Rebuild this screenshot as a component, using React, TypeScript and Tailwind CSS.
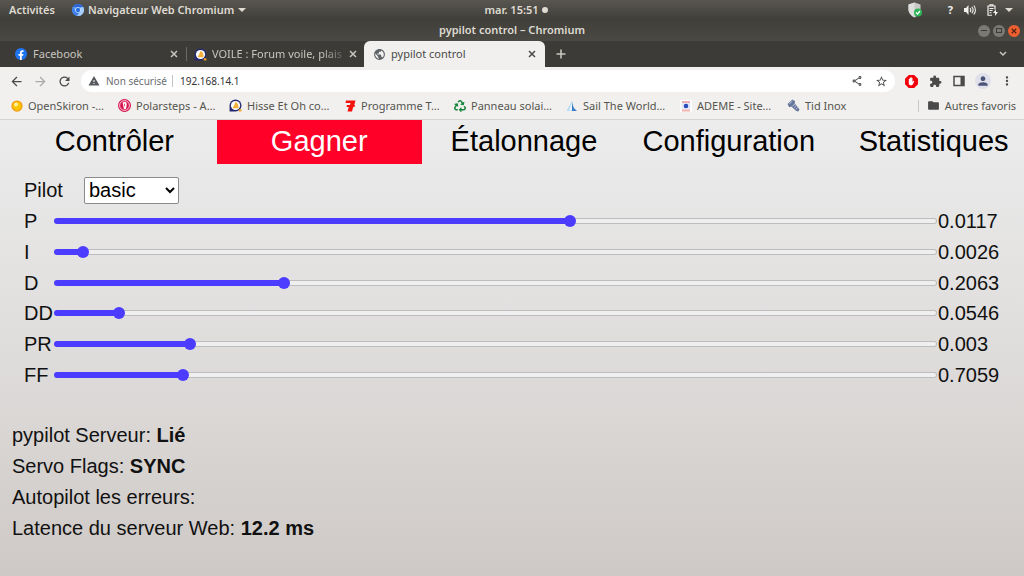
import React, { useState } from 'react';
import {
  MdArrowBack,
  MdArrowForward,
  MdExtension,
  MdFolder,
  MdMoreVert,
  MdOutlineShare,
  MdPerson,
  MdPublic,
  MdRefresh,
  MdStarBorder,
  MdWarning,
} from 'react-icons/md';
import { FaRecycle } from 'react-icons/fa';

const ChromiumIcon = () => (
  <svg viewBox="0 0 24 24" className="h-3 w-3">
    <circle cx="12" cy="12" r="12" fill="#5c9df5" />
    <path d="M1.600 6A12 12 0 0 1 22.400 6L12 6.500z" fill="#2a66d8" />
    <path d="M1.600 6A12 12 0 0 0 10 23.800L14.500 17 6.800 14z" fill="#3f7fe8" />
    <path d="M22.400 6A12 12 0 0 1 10 23.800L17 14.500 17 7z" fill="#a5cdfb" />
    <circle cx="12" cy="12" r="5.500" fill="#e8f1fe" />
    <circle cx="12" cy="12" r="4.400" fill="#2a6fe0" />
  </svg>
);

const FacebookIcon = () => (
  <svg viewBox="0 0 24 24" className="h-3 w-3">
    <circle cx="12" cy="12" r="12" fill="#1f74f2" />
    <path d="M10 24v-8.500H7V12h3V9.500c0-3.200 1.800-4.900 4.700-4.900.9 0 1.900.2 2.300.3v3h-1.500c-1.500 0-2 .9-2 1.900V12h3.300l-.6 3.500h-2.700V24z" fill="#fff" />
  </svg>
);

const HisseIcon = () => (
  <svg viewBox="0 0 24 24" className="h-[13px] w-[13px]">
    <path d="M1 23V12A11 11 0 1 1 12 23z" fill="#26296f" />
    <circle cx="12" cy="12" r="8.500" fill="#fff" />
    <path d="M12 5c5 3 6 7 5.500 12H6.500C9 13 11 9 12 5z" fill="#f5b13c" />
    <path d="M18 19h5v4h-5z" fill="#f5a11c" />
  </svg>
);

const SunIcon = () => (
  <svg viewBox="0 0 24 24" className="h-3 w-3">
    <circle cx="12" cy="12" r="10" fill="#ffc400" stroke="#f09a10" strokeWidth="2.500" />
    <circle cx="10" cy="9" r="4" fill="#fff0a0" />
  </svg>
);

const PolarstepsIcon = () => (
  <svg viewBox="0 0 24 24" className="h-[13px] w-[13px]">
    <circle cx="12" cy="12" r="12" fill="#d9154f" />
    <circle cx="12" cy="12" r="9" fill="none" stroke="#fff" strokeWidth="1.500" />
    <path d="M8.500 6.500L13 5c2.500 1 3.500 3 3 6l-1 7-4 1z" fill="#fff" />
    <path d="M11 8l2 2-1 5z" fill="#d9154f" />
  </svg>
);

const ProgrammeIcon = () => (
  <svg viewBox="0 0 24 24" className="h-3 w-3">
    <path d="M4 1h19l-2.500 9H22l-1 4h-2.500L16 23H7l2.500-9H5l1-4h6l1-4H3z" fill="#f5120d" />
  </svg>
);

const SailIcon = () => (
  <svg viewBox="0 0 24 24" className="h-3 w-3">
    <path d="M12 1L1 22h10z" fill="#b8dcf3" />
    <path d="M13 1c0 8 1 15 9 21H11z" fill="#3c7cc4" />
    <path d="M12 5v16H6z" fill="#e8f4fb" />
  </svg>
);

const AdemeIcon = () => (
  <svg viewBox="0 0 24 24" className="h-3 w-3">
    <path d="M0 0h24v24H0z" fill="#fff" />
    <path d="M4 2h16v4H4zM4 19h16v4H4z" fill="#f2b0ac" />
    <path d="M3 6h18v12H3z" fill="#e2e9fa" />
    <circle cx="12" cy="12" r="4.500" fill="#2b4bb8" />
  </svg>
);

const ScrewIcon = () => (
  <svg viewBox="0 0 24 24" className="h-[13px] w-[13px]">
    <path d="M1 9L10 1l5 3-1 4 9 11-2 4-4-1L8 14l-4 1z" fill="#66759b" />
    <path d="M4 9l6-5M10 13l5-4M13 16l4-4M16 19l4-3" stroke="#cdd5e6" strokeWidth="1.500" />
  </svg>
);

const ShieldIcon = () => (
  <svg viewBox="0 0 28 32" className="h-4 w-[14px]">
    <path d="M13 1l12 4v10c0 7-5 12-12 16C6 27 1 22 1 15V5z" fill="#c9c9c7" />
    <path d="M13 1v30C6 27 1 22 1 15V5z" fill="#dededc" />
    <circle cx="20" cy="21" r="8" fill="#2fb457" />
    <path d="M16 21l3 3 5-6" fill="none" stroke="#fff" strokeWidth="2.500" />
  </svg>
);

const VolumeIcon = () => (
  <svg viewBox="0 0 24 24" className="h-3 w-3">
    <path d="M0 8h4l5-6v20l-5-6H0z" fill="#f2f1ee" />
    <path d="M12 8c2 2.500 2 5.500 0 8M15.500 5.500c3.500 4 3.500 9 0 13M19.500 3c4.500 5 4.500 13 0 18" fill="none" stroke="#f2f1ee" strokeWidth="2.200" />
  </svg>
);

const BatteryIcon = () => (
  <svg viewBox="0 0 22 24" className="h-3 w-[11px]" fill="none" stroke="#f2f1ee" strokeWidth="2.400">
    <path d="M6 3V1.500h6V3M10 22.500H2V4h14v7" />
    <path d="M5 9h8M5 13h6M5 17.500h4" />
    <path d="M18 11l-6 7h4v6l6-8h-4z" fill="#f2f1ee" stroke="none" />
  </svg>
);

const CaretIcon = () => (
  <svg viewBox="0 0 8 4" className="h-1 w-2">
    <path d="M0 0h8L4 4z" fill="currentColor" />
  </svg>
);

const StopHandIcon = () => (
  <svg viewBox="0 0 24 24" className="h-[13px] w-[13px]">
    <path d="M7 0h10l7 7v10l-7 7H7l-7-7V7z" fill="#f4000b" />
    <path d="M7 8c0-1 1.600-1 1.600 0V6c0-1.200 1.700-1.200 1.700 0V5c0-1.200 1.800-1.200 1.800 0v1c0-1.200 1.700-1.200 1.700 0v7l1.500-2c1-1 2.200-.3 1.700.8l-2.500 5.500c-.6 1.300-1.500 1.700-3 1.700H11c-2.500 0-4-1.500-4-4z" fill="#fff" />
  </svg>
);

const SidePanelIcon = () => (
  <svg viewBox="0 0 24 24" className="h-3 w-3">
    <path d="M2 3h20v18H2z" fill="none" stroke="#4a4a4a" strokeWidth="3" />
    <path d="M15 3h7v18h-7z" fill="#4a4a4a" />
  </svg>
);

const CloseIcon = () => (
  <svg viewBox="0 0 8 8" className="h-2 w-2" fill="none" stroke="currentColor" strokeWidth="1.500">
    <path d="M1 1l6 6M7 1L1 7" />
  </svg>
);

const PlusIcon = () => (
  <svg viewBox="0 0 10 10" className="h-[10px] w-[10px]" fill="none" stroke="currentColor" strokeWidth="1.600">
    <path d="M5 0.500v9M0.500 5h9" />
  </svg>
);

const ChevronIcon = () => (
  <svg viewBox="0 0 8 6" className="h-[6px] w-2" fill="none" stroke="currentColor" strokeWidth="1.500">
    <path d="M1 1l3 3 3-3" />
  </svg>
);

const bookmarks = [
  { label: 'OpenSkiron -…', icon: <SunIcon />, width: 'w-[108px]' },
  { label: 'Polarsteps - A…', icon: <PolarstepsIcon />, width: 'w-[111px]' },
  { label: 'Hisse Et Oh co…', icon: <HisseIcon />, width: 'w-[114px]' },
  { label: 'Programme T…', icon: <ProgrammeIcon />, width: 'w-[110px]' },
  { label: 'Panneau solai…', icon: <FaRecycle className="h-3 w-3 text-[#15843c]" />, width: 'w-[112px]' },
  { label: 'Sail The World…', icon: <SailIcon />, width: 'w-[114px]' },
  { label: 'ADEME - Site…', icon: <AdemeIcon />, width: 'w-[108px]' },
  { label: 'Tid Inox', icon: <ScrewIcon />, width: 'w-[80px]' },
];

const pages = ['Contrôler', 'Gagner', 'Étalonnage', 'Configuration', 'Statistiques'];

const gains = [
  { name: 'P', value: '0.0117', position: 586 },
  { name: 'I', value: '0.0026', position: 25 },
  { name: 'D', value: '0.2063', position: 257 },
  { name: 'DD', value: '0.0546', position: 67 },
  { name: 'PR', value: '0.003', position: 149 },
  { name: 'FF', value: '0.7059', position: 140 },
];

const status = [
  { label: 'pypilot Serveur:', value: 'Lié' },
  { label: 'Servo Flags:', value: 'SYNC' },
  { label: 'Autopilot les erreurs:', value: '' },
  { label: 'Latence du serveur Web:', value: '12.2 ms' },
];

const SystemBar = () => (
  <div className="grid h-5 grid-cols-[1fr_auto_1fr] items-center bg-linear-to-b from-[#595650] to-[#3f3e39] text-[11px] font-semibold text-[#dfdbd2]">
    <div className="flex items-center pl-[9px]">
      <button className="w-[63px] text-left">Activités</button>
      <button className="flex items-center gap-1 whitespace-nowrap">
        <ChromiumIcon />
        Navigateur Web Chromium
        <CaretIcon />
      </button>
    </div>
    <button className="flex items-center gap-[3px] pl-2">
      mar. 15:51
      <span className="h-[6px] w-[6px] rounded-full bg-[#dfdbd2]" />
    </button>
    <div className="flex items-center justify-end pr-[11px]">
      <ShieldIcon />
      <span className="w-[42px] pr-[11px] text-right font-bold text-[#f2f1ee]">?</span>
      <VolumeIcon />
      <span className="ml-[11px] mr-[7px]"><BatteryIcon /></span>
      <CaretIcon />
    </div>
  </div>
);

const TitleBar = () => (
  <div className="grid h-[21px] grid-cols-[1fr_auto_1fr] items-center bg-linear-to-b from-[#403f3a] to-[#4b4944] text-[11px] font-semibold text-[#dfdbd2]">
    <span />
    <span>pypilot control – Chromium</span>
    <div className="flex justify-end gap-[3px] pr-1">
      <button aria-label="Réduire" className="flex h-3 w-3 items-center justify-center rounded-full bg-[#7b7973]">
        <span className="h-px w-[6px] bg-[#3c3b37]" />
      </button>
      <button aria-label="Agrandir" className="flex h-3 w-3 items-center justify-center rounded-full bg-[#7b7973]">
        <span className="h-[5px] w-[6px] border border-[#3c3b37]" />
      </button>
      <button aria-label="Fermer" className="flex h-3 w-3 items-center justify-center rounded-full bg-[#ee5f32] text-[#53200f]">
        <svg viewBox="0 0 8 8" className="h-[6px] w-[6px]" fill="none" stroke="currentColor" strokeWidth="1.500">
          <path d="M1 1l6 6M7 1L1 7" />
        </svg>
      </button>
    </div>
  </div>
);

const TabStrip = () => (
  <div className="flex h-[26px] items-stretch bg-[#3c3b37] text-[11px] text-[#c9c6bf]">
    <div className="flex w-[186px] items-center pl-[15px] pr-2">
      <FacebookIcon />
      <span className="ml-[6px] flex-1">Facebook</span>
      <button aria-label="Fermer l'onglet Facebook"><CloseIcon /></button>
    </div>
    <div className="my-[6px] w-px bg-[#6c6a65]" />
    <div className="flex w-[177px] items-center pl-[7px] pr-[7px]">
      <HisseIcon />
      <span className="ml-[5px] flex-1 whitespace-nowrap mask-r-from-80%">VOILE : Forum voile, plais</span>
      <button aria-label="Fermer l'onglet VOILE"><CloseIcon /></button>
    </div>
    <div className="flex w-[181px] items-center rounded-t-md bg-[#f1f0ee] pl-[9px] pr-[9px] text-[#4a4a48]">
      <MdPublic className="h-[13px] w-[13px] text-[#5f6368]" />
      <span className="ml-[5px] flex-1">pypilot control</span>
      <button aria-label="Fermer l'onglet pypilot control"><CloseIcon /></button>
    </div>
    <button aria-label="Nouvel onglet" className="ml-[11px]"><PlusIcon /></button>
    <button aria-label="Rechercher dans les onglets" className="ml-auto mr-[17px]"><ChevronIcon /></button>
  </div>
);

const Toolbar = () => (
  <div className="flex h-7 items-center bg-[#f1f0ee] px-[9px] text-[#4a4a4a]">
    <div className="flex gap-[9px]">
      <button aria-label="Précédent"><MdArrowBack className="h-[15px] w-[15px]" /></button>
      <button aria-label="Suivant" className="text-[#a8a8a6]"><MdArrowForward className="h-[15px] w-[15px]" /></button>
      <button aria-label="Actualiser"><MdRefresh className="h-[15px] w-[15px]" /></button>
    </div>
    <div className="ml-[9px] flex h-[22px] flex-1 items-center rounded-full bg-white pl-[7px] pr-[6px]">
      <MdWarning className="h-3 w-3 text-[#55585c]" />
      <span className="ml-[6px] w-[67px] whitespace-nowrap border-r border-[#c4c4c4] text-[10px] leading-3 text-[#6a6d71]">Non sécurisé</span>
      <input aria-label="Adresse" defaultValue="192.168.14.1" className="min-w-0 flex-1 pl-[7px] text-[10px] text-[#333] outline-none" />
      <div className="flex gap-2">
        <button aria-label="Partager" className="flex w-4 items-center justify-center"><MdOutlineShare className="h-3 w-3" /></button>
        <button aria-label="Ajouter aux favoris" className="flex w-4 items-center justify-center"><MdStarBorder className="h-[13px] w-[13px]" /></button>
      </div>
    </div>
    <div className="ml-2 flex items-center gap-2">
      <button aria-label="Bloqueur" className="flex w-4 justify-center"><StopHandIcon /></button>
      <button aria-label="Extensions" className="flex w-4 justify-center"><MdExtension className="h-[13px] w-[13px]" /></button>
      <button aria-label="Panneau latéral" className="flex w-4 justify-center"><SidePanelIcon /></button>
      <button aria-label="Profil" className="flex h-4 w-4 items-center justify-center rounded-full bg-[#dfe0ea] text-[#4c5378]">
        <MdPerson className="h-[14px] w-[14px]" />
      </button>
      <button aria-label="Menu" className="flex w-4 justify-center"><MdMoreVert className="h-[14px] w-[14px]" /></button>
    </div>
  </div>
);

const BookmarksBar = () => (
  <div className="flex h-[25px] items-center border-b border-[#d4d3d1] bg-[#f1f0ee] pb-[3px] pl-[10px] pr-2 text-[11px] leading-4 text-[#55554f]">
    {bookmarks.map((bookmark) => (
      <a key={bookmark.label} href="#" className={`flex shrink-0 items-center gap-[5px] whitespace-nowrap ${bookmark.width}`}>
        <span className="flex w-[13px] justify-center">{bookmark.icon}</span>
        {bookmark.label}
      </a>
    ))}
    <div className="ml-auto mr-2 h-3 w-px bg-[#c9c8c5]" />
    <button className="flex items-center gap-[5px] whitespace-nowrap">
      <MdFolder className="h-[13px] w-[13px] text-[#4a4a4a]" />
      Autres favoris
    </button>
  </div>
);

interface GainRowProps {
  name: string;
  value: string;
  initial: number;
}

const GainRow = ({ name, value, initial }: GainRowProps) => {
  const [position, setPosition] = useState(initial);

  // the fill ends under the middle of the 12px thumb
  const fill = `calc(6px + (100% - 12px) * ${position / 1000})`;

  return (
    <div className="flex items-center">
      <label htmlFor={`gain-${name}`} className="w-[30px]">{name}</label>
      <input
        id={`gain-${name}`}
        type="range"
        min={0}
        max={1000}
        value={position}
        onChange={(e) => setPosition(Number(e.target.value))}
        className="h-[6px] min-w-0 flex-1 appearance-none rounded-full border border-transparent [&::-webkit-slider-thumb]:h-[12px] [&::-webkit-slider-thumb]:w-[12px] [&::-webkit-slider-thumb]:appearance-none [&::-webkit-slider-thumb]:rounded-full [&::-webkit-slider-thumb]:bg-[#4b3cff]"
        style={{
          background: `linear-gradient(#4b3cff, #4b3cff) 0 0 / ${fill} 100% no-repeat border-box, linear-gradient(#efefef, #efefef) padding-box, linear-gradient(#bdbdbf, #bdbdbf) border-box`,
        }}
      />
      <output htmlFor={`gain-${name}`} className="w-[75px] pl-px">{value}</output>
    </div>
  );
};

const App = () => {
  const [page, setPage] = useState('Gagner');

  return (
    <div className="flex min-h-screen flex-col overflow-hidden font-['Noto_Sans',sans-serif]">
      <SystemBar />
      <TitleBar />
      <TabStrip />
      <Toolbar />
      <BookmarksBar />
      <main className="flex-1 bg-linear-to-b from-[#ececec] via-[#dfdddc] to-[#cec9c6] font-['Liberation_Sans',Arial,sans-serif] text-[20px] text-[#111]">
        <nav className="ml-3 grid w-full grid-cols-5 text-[29px] text-black">
          {pages.map((name) => (
            <button
              key={name}
              onClick={() => setPage(name)}
              className={page === name ? 'h-11 bg-[#ff0029] text-white' : 'h-11'}
            >
              {name}
            </button>
          ))}
        </nav>

        <div className="mt-[11px] flex items-center pl-6">
          <label htmlFor="pilot" className="w-[60px]">Pilot</label>
          <select id="pilot" className="h-[27px] w-[95px] rounded-xs border border-[#8a8a8a] bg-white text-black">
            <option>basic</option>
          </select>
        </div>

        <div className="mt-px grid h-[184px] auto-rows-fr pl-6 pr-3">
          {gains.map((gain) => (
            <GainRow key={gain.name} name={gain.name} value={gain.value} initial={gain.position} />
          ))}
        </div>

        <div className="mt-[30px] grid h-[123px] auto-rows-fr items-center pl-3">
          {status.map((item) => (
            <p key={item.label}>
              {item.label} <b>{item.value}</b>
            </p>
          ))}
        </div>
      </main>
    </div>
  );
};

export default App;
